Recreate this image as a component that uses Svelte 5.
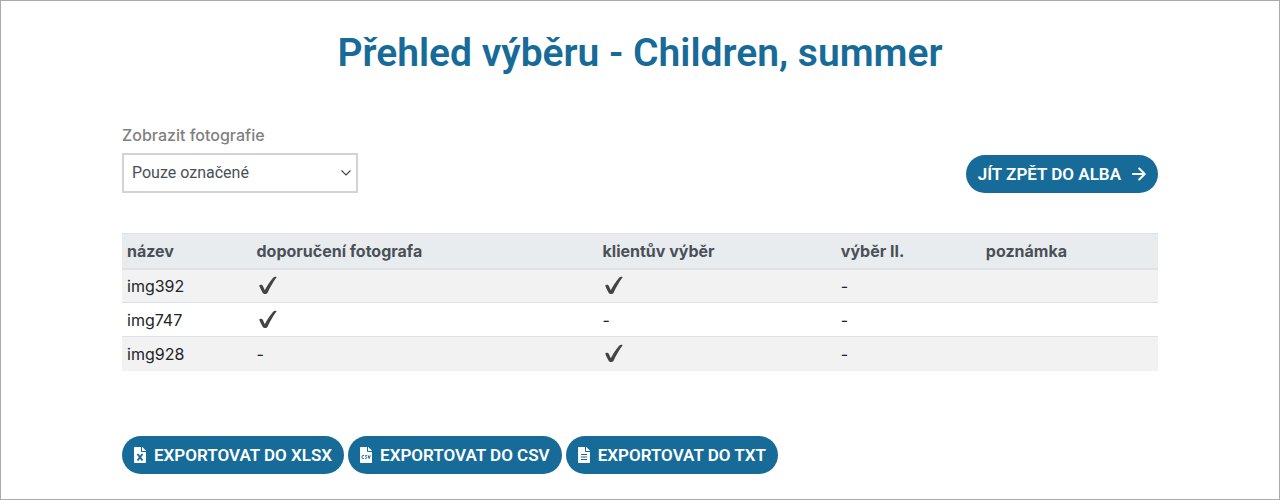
<script>
    let filter = "selected";

    const columns = [
        "název",
        "doporučení fotografa",
        "klientův výběr",
        "výběr II.",
        "poznámka",
    ];

    const photos = [
        { name: "img392", marks: [true, true, false], note: "" },
        { name: "img747", marks: [true, false, false], note: "" },
        { name: "img928", marks: [false, true, false], note: "" },
    ];

    const exports = ["xlsx", "csv", "txt"];
</script>

<svelte:head>
    <title>Přehled výběru</title>
</svelte:head>

<main>
    <h1>Přehled výběru - Children, summer</h1>

    <div class="toolbar">
        <div class="filter">
            <label for="filter">Zobrazit fotografie</label>
            <select id="filter" bind:value={filter}>
                <option value="selected">Pouze označené</option>
                <option value="all">Všechny</option>
            </select>
        </div>
        <button class="btn">
            JÍT ZPĚT DO ALBA
            <svg class="arrow" viewBox="0 0 14 14" aria-hidden="true">
                <path d="M1 7h11M7.200 1.500 12.700 7l-5.500 5.500" />
            </svg>
        </button>
    </div>

    <table>
        <thead>
            <tr>
                {#each columns as column}
                    <th>{column}</th>
                {/each}
            </tr>
        </thead>
        <tbody>
            {#each photos as photo}
                <tr>
                    <td>{photo.name}</td>
                    {#each photo.marks as marked}
                        <td>
                            {#if marked}
                                <svg class="check" viewBox="0 0 22 20" role="img" aria-label="ano">
                                    <path
                                        d="M2.200 9.600C3.200 8.300 5.200 8.500 5.900 10l1.900 4.300C10.300 9.600 13 5.300 16.300 1.500c.8-.9 3-1 3.300-.3-3.700 5-6.600 10.300-9 15.500-.7 1.600-3.800 1.800-4.800.2-1.300-2-2.400-4.300-3.600-7.300z"
                                    />
                                </svg>
                            {:else}
                                -
                            {/if}
                        </td>
                    {/each}
                    <td>{photo.note}</td>
                </tr>
            {/each}
        </tbody>
    </table>

    <div class="exports">
        {#each exports as type}
            <button class="btn">
                <svg class="file" viewBox="0 0 12 16" aria-hidden="true">
                    <path
                        class="sheet"
                        d="M.8 0H7v4.200c0 .4.300.8.800.8H12v10.200c0 .5-.3.800-.8.800H.8c-.5 0-.8-.3-.8-.8V.8C0 .3.300 0 .8 0zM8 0h.3l3.500 3.500.2.500H8z"
                    />
                    {#if type === "xlsx"}
                        <path class="cross" d="m3.500 7 5 6.500M8.500 7l-5 6.500" />
                    {:else if type === "csv"}
                        <path
                            class="line"
                            d="M4 8.500c-1.600-.5-2 .4-2 1.500s.4 2 1.800 1.500M7 8.500c-1.300-.3-1.900.1-1.700.7.200.7 1.500.6 1.500 1.500 0 .8-.8 1-1.800.8M8.100 8.300l1 3.200 1.100-3.200"
                        />
                    {:else}
                        <path class="line" d="M3 7.500h6M3 10h6M3 12.500h6" />
                    {/if}
                </svg>
                EXPORTOVAT DO {type.toUpperCase()}
            </button>
        {/each}
    </div>
</main>

<style>
    :global(body) {
        margin: 0;
        background: #fff;
    }

    main {
        box-sizing: border-box;
        min-height: 100vh;
        padding: 28px 121px 25px;
        border: 1px solid #aaa;
        font-family: Inter, "Liberation Sans", sans-serif;
        font-size: 16px;
        line-height: 24px;
        color: #212529;
    }

    h1 {
        margin: 0 0 46px;
        font-family: Roboto, Inter, sans-serif;
        font-size: 39px;
        line-height: 48px;
        font-weight: 600;
        text-align: center;
        color: #176b98;
    }

    .toolbar {
        display: flex;
        justify-content: space-between;
        align-items: flex-end;
        margin-bottom: 40px;
    }

    .filter {
        display: flex;
        flex-direction: column;
        gap: 6px;
        width: 236px;
    }

    label {
        font-weight: 500;
        color: #808080;
    }

    select {
        box-sizing: border-box;
        height: 40px;
        padding: 0 28px 0 8px;
        border: 2px solid #d3d3d3;
        border-radius: 0;
        appearance: none;
        font: inherit;
        font-family: Roboto, Inter, sans-serif;
        color: #495057;
        background: #fff
            url("data:image/svg+xml,%3Csvg xmlns='http://www.w3.org/2000/svg' viewBox='0 0 12 8'%3E%3Cpath d='M1.500 1.500 6 6l4.500-4.500' fill='none' stroke='%23444' stroke-width='1.200'/%3E%3C/svg%3E")
            no-repeat right 4px center / 12px 8px;
    }

    .btn {
        display: inline-flex;
        align-items: center;
        height: 38px;
        padding: 0 12px;
        border: 0;
        border-radius: 19px;
        font-family: Roboto, Inter, sans-serif;
        font-size: 17px;
        line-height: 24px;
        font-weight: 600;
        white-space: nowrap;
        color: #fff;
        background: #176b98;
        cursor: pointer;
    }

    .btn:hover {
        background: #12567b;
    }

    .arrow {
        width: 14px;
        height: 14px;
        margin-left: 11px;
        fill: none;
        stroke: #fff;
        stroke-width: 2;
        stroke-linecap: round;
        stroke-linejoin: round;
    }

    table {
        width: 100%;
        table-layout: fixed;
        border-collapse: collapse;
        margin-bottom: 65px;
    }

    th,
    td {
        box-sizing: border-box;
        height: 34px;
        padding: 0 5px;
        border-top: 1px solid #dee2e6;
        text-align: left;
    }

    th {
        height: 35px;
        border-bottom: 2px solid #dee2e6;
        font-weight: 700;
        color: #495057;
        background: #e9ecef;
    }

    th:nth-child(1) {
        width: 12.5%;
    }

    th:nth-child(2) {
        width: 33.4%;
    }

    th:nth-child(3) {
        width: 23%;
    }

    th:nth-child(4) {
        width: 14%;
    }

    tbody tr:nth-child(odd) {
        background: #f2f2f2;
    }

    .check {
        display: block;
        width: 22px;
        height: 20px;
        fill: #444;
    }

    .exports {
        display: flex;
        flex-wrap: wrap;
        gap: 4px;
    }

    .file {
        width: 12px;
        height: 16px;
        margin-right: 8px;
    }

    .sheet {
        fill: #fff;
    }

    .cross,
    .line {
        fill: none;
        stroke: #176b98;
        stroke-width: 1;
    }

    .cross {
        stroke-width: 2;
    }
</style>
